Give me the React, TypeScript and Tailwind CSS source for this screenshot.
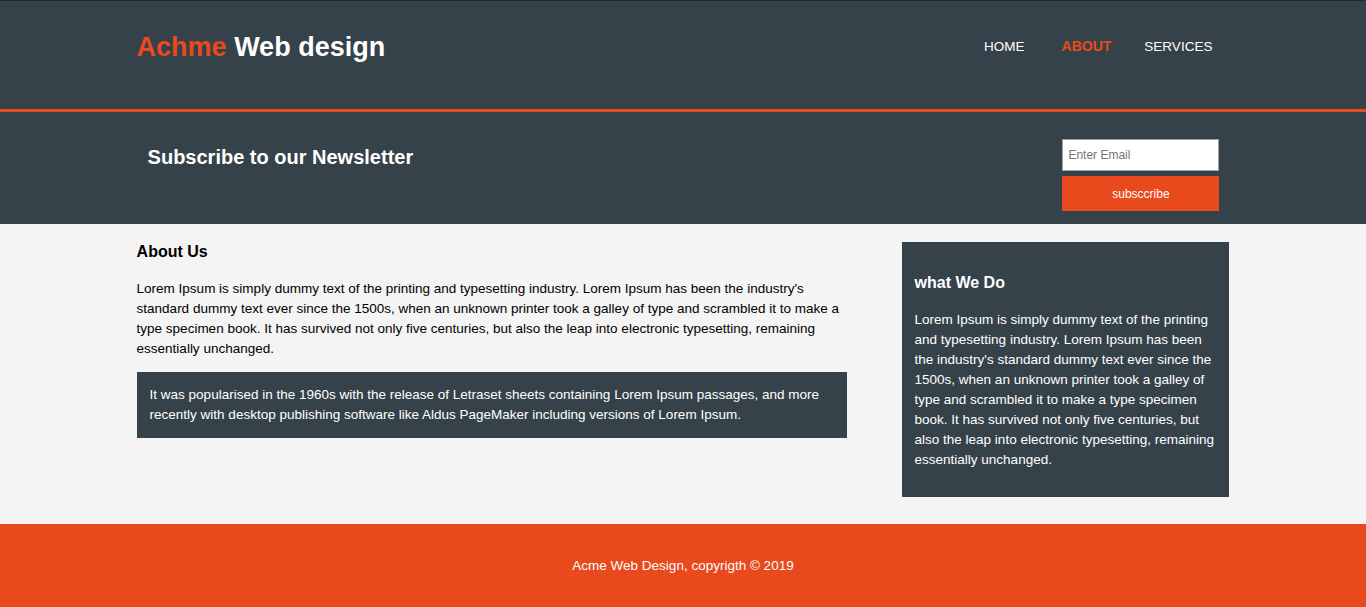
export default function App() {
  return (
    <div className="min-h-[607px] bg-[#f4f4f4] font-['Liberation_Sans',Arial,sans-serif] text-[13.5px] leading-[20px] text-black">
      <header className="h-[112px] border-t border-[#1c2a31] border-b-[3px] border-b-[#e8491d] bg-[#35424a] text-white">
        <div className="mx-auto flex h-full w-[80%] items-start justify-between">
          <h1 className="mt-[30px] text-[27px] font-bold leading-[32px]">
            <span className="text-[#e8491d]">Achme</span> Web design
          </h1>
          <nav className="mt-[36px] mr-[17px] flex items-baseline text-[13.5px] uppercase leading-[18px]">
            <a className="mr-[37px]">Home</a>
            <a className="mr-[33px] text-[14px] font-bold text-[#e8491d]">About</a>
            <a>Services</a>
          </nav>
        </div>
      </header>

      <section className="h-[112px] bg-[#35424a] text-white">
        <div className="mx-auto flex w-[80%] items-start justify-between pl-[11px] pr-[10px]">
          <h2 className="mt-[33px] text-[20px] font-bold leading-[24px]">Subscribe to our Newsletter</h2>
          <form className="mt-[27px] flex w-[157px] flex-col gap-[5px]">
            <input
              type="email"
              placeholder="Enter Email"
              className="h-[32px] w-full border border-[#a0a0a0] bg-white px-[5px] text-[12px] text-black placeholder:text-[#757575]"
            />
            <button
              type="button"
              className="h-[35px] w-full bg-[#e8491d] text-[12px] text-white"
            >
              subsccribe
            </button>
          </form>
        </div>
      </section>

      <main className="mx-auto flex w-[80%] items-start justify-between pt-[18px] pb-[27px]">
        <article className="w-[65%]">
          <h1 className="pt-[1px] text-[16px] font-bold leading-[18px]">About Us</h1>
          <p className="mt-[18px]">
            Lorem Ipsum is simply dummy text of the printing and typesetting industry. Lorem Ipsum has been the industry's
            standard dummy text ever since the 1500s, when an unknown printer took a galley of type and scrambled it to make a
            type specimen book. It has survived not only five centuries, but also the leap into electronic typesetting,
            remaining essentially unchanged.
          </p>
          <div className="mt-[13px] bg-[#35424a] px-[13px] py-[13px] text-white">
            It was popularised in the 1960s with the release of Letraset sheets containing Lorem Ipsum passages, and more
            recently with desktop publishing software like Aldus PageMaker including versions of Lorem Ipsum.
          </div>
        </article>

        <aside className="w-[30%] bg-[#35424a] px-[13px] pt-[13px] pb-[13px] text-white">
          <h3 className="mt-[19px] text-[16px] font-bold leading-[18px]">what We Do</h3>
          <p className="mt-[18px] mb-[14px]">
            Lorem Ipsum is simply dummy text of the printing and typesetting industry. Lorem Ipsum has been the industry's
            standard dummy text ever since the 1500s, when an unknown printer took a galley of type and scrambled it to make a
            type specimen book. It has survived not only five centuries, but also the leap into electronic typesetting,
            remaining essentially unchanged.
          </p>
        </aside>
      </main>

      <footer className="flex h-[83px] items-center justify-center bg-[#e8491d] text-white">
        <p>Acme Web Design, copyrigth © 2019</p>
      </footer>
    </div>
  );
}
